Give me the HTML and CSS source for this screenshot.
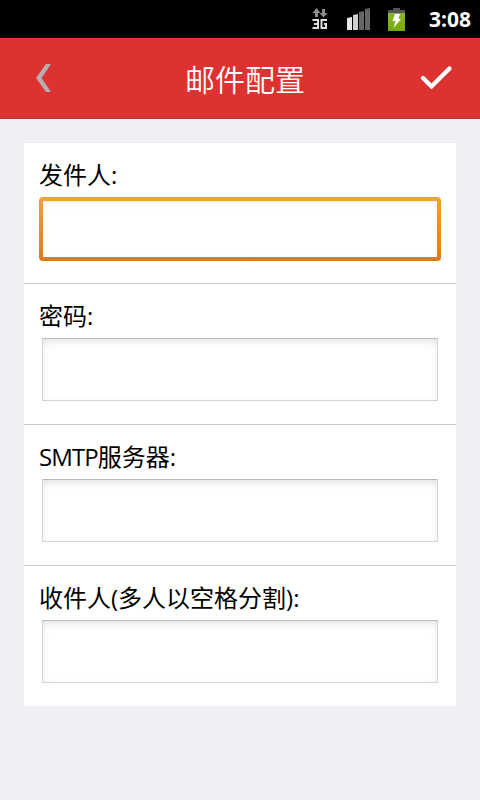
FILE: index.html
```html
<!DOCTYPE html>
<html lang="zh-CN">
<head>
    <meta charset="UTF-8">
    <meta name="viewport" content="width=device-width, initial-scale=1.0">
    <title>邮件配置</title>
    <link rel="stylesheet" href="styles.css">
</head>
<body>
    <div class="status-bar">
        <svg class="network" width="18" height="24" viewBox="0 0 18 24">
            <path fill="#8c8c8c" d="M5.500 1L9.500 6H7v4H4V6H1.500zM11 2h3v4h2.500l-4 4.500L8.500 6H11z"/>
            <path fill="none" stroke="#dcdcdc" stroke-width="2" d="M1.500 13H7v8H1.500M3 17h4M16 13h-5.500v8H15v-4h-2"/>
        </svg>
        <svg class="signal" width="24" height="22" viewBox="0 0 24 22">
            <path fill="#e6e6e6" d="M0 10l5-1v13H0z"/>
            <path fill="#cfcfcf" d="M6 7l5-1v16H6z"/>
            <path fill="#666" d="M12 4l5-1v19h-5zM18 1l5-1v22h-5z"/>
        </svg>
        <svg class="battery" width="18" height="24" viewBox="0 0 18 24">
            <defs>
                <linearGradient id="charge" x1="0" y1="0" x2="0" y2="1">
                    <stop offset="0" stop-color="#8fb82a"/>
                    <stop offset="1" stop-color="#74a808"/>
                </linearGradient>
            </defs>
            <path fill="url(#charge)" d="M0 4h17v20H0z"/>
            <path fill="#555" d="M5 1h7v2h5v3H0V3h5z"/>
            <path fill="#fff" d="M7 7h5l-1.500 5H13L5.500 21 7.500 14H4.500z"/>
        </svg>
        <span class="clock">3:08</span>
    </div>
    <div class="header">
        <a class="back">
            <svg width="18" height="30" viewBox="0 0 18 30">
                <path fill="#b5b0b0" d="M11 1h5L6.500 15 16 29h-5L1 15z"/>
            </svg>
        </a>
        <h1>邮件配置</h1>
        <a class="done">
            <svg width="34" height="28" viewBox="0 0 34 28">
                <path fill="none" stroke="#7a1c1c" stroke-opacity=".4" stroke-width="4" stroke-linecap="round" d="M4 15l8.500 8.500L30.500 5.500"/>
                <path fill="none" stroke="#fff" stroke-width="4.400" stroke-linecap="round" d="M4 14l8.500 8.500L30.500 4.500"/>
            </svg>
        </a>
    </div>
    <form class="card">
        <div class="row">
            <label for="sender">发件人:</label>
            <div class="field focused"><input type="text" id="sender"></div>
        </div>
        <div class="row">
            <label for="password">密码:</label>
            <div class="field"><input type="password" id="password"></div>
        </div>
        <div class="row">
            <label for="smtp"><span class="latin">SMTP</span>服务器:</label>
            <div class="field"><input type="text" id="smtp"></div>
        </div>
        <div class="row">
            <label for="receiver">收件人(多人以空格分割):</label>
            <div class="field"><input type="text" id="receiver"></div>
        </div>
    </form>
</body>
</html>
```
FILE: styles.css
```css
* {
    box-sizing: border-box;
}
body {
    margin: 0;
    min-height: 100vh;
    background: #eeeff4;
    color: #000;
    font-family: "Open Sans", "Noto Sans CJK SC", sans-serif;
}
svg {
    display: block;
}
.status-bar {
    display: flex;
    justify-content: flex-end;
    align-items: center;
    height: 38px;
    padding-right: 9px;
    background: #000;
}
.signal {
    margin-left: 18px;
}
.battery {
    margin-left: 17px;
}
.clock {
    margin-left: 23px;
    color: #fff;
    font-size: 21px;
    font-weight: bold;
    line-height: 38px;
}
.header {
    display: flex;
    justify-content: space-between;
    align-items: center;
    height: 81px;
    padding: 0 27px 0 35px;
    background: #de3131;
    border-bottom: 1px solid #a83a40;
}
.header h1 {
    margin: 0 0 0 18px;
    padding-top: 3px;
    color: #fff;
    font-size: 30px;
    font-weight: 350;
    line-height: 40px;
}
.card {
    margin: 24px;
    background: #fff;
}
.row {
    height: 140px;
    padding: 15px 15px 0;
}
.row + .row {
    height: 141px;
    border-top: 1px solid #cdcdcf;
}
.row label {
    display: block;
    height: 39px;
    font-size: 24px;
    font-weight: 400;
    line-height: 34px;
    white-space: nowrap;
}
.latin {
    letter-spacing: -0.9px;
}
.field {
    height: 63px;
    margin: 0 3px;
    border: 1px solid #d4d4d4;
    border-top-color: #bcbcbc;
    background: #fff;
    box-shadow: inset 0 5px 10px -3px rgba(0, 0, 0, 0.11), inset 0 0 6px rgba(0, 0, 0, 0.03);
}
.field input {
    display: block;
    width: 100%;
    height: 100%;
    padding: 0 10px;
    border: none;
    outline: none;
    background: none;
    font-size: 24px;
}
.field.focused {
    height: 64px;
    margin: 0;
    padding: 4px;
    border: none;
    border-radius: 4px;
    background: linear-gradient(#f2a038, #df7b19);
    box-shadow: none;
}
.focused input {
    background: #fff;
    box-shadow: inset 0 4px 10px -3px rgba(0, 0, 0, 0.07), inset 0 0 5px rgba(0, 0, 0, 0.03);
}
```
